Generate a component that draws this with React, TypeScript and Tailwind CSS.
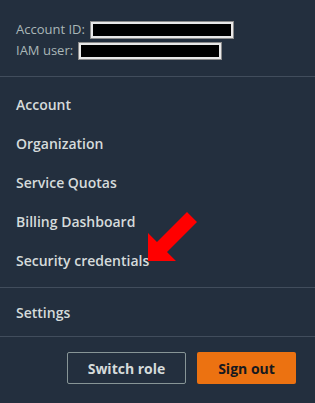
const menu = ["Account", "Organization", "Service Quotas", "Billing Dashboard", "Security credentials"];

export default function App() {
  return (
    <div
      className="relative w-[315px] h-[403px] bg-[#232f3e] text-[#d5dbdb] overflow-hidden"
      style={{ fontFamily: '"Open Sans", "Noto Sans", sans-serif' }}
    >
      {/* Account info */}
      <div className="h-[77px] pt-[19px] px-4 text-[13px] text-[#aab7b8] border-b border-[#414d5c]">
        <div className="flex items-center h-[21px] gap-[6px]">
          <span>Account ID:</span>
          <span className="block w-[142px] h-[16px] bg-black border-2 border-[#e8e8e8] outline outline-1 outline-[#8a8a8a]" />
        </div>
        <div className="flex items-center h-[21px] gap-[6px]">
          <span>IAM user:</span>
          <span className="block w-[142px] h-[16px] bg-black border-2 border-[#e8e8e8] outline outline-1 outline-[#8a8a8a]" />
        </div>
      </div>

      {/* Menu */}
      <div className="pt-[8px] pb-[7px] border-b border-[#414d5c]">
        {menu.map((m) => (
          <div key={m} className="h-[39px] flex items-center px-4 text-[14px] font-semibold">
            {m}
          </div>
        ))}
      </div>

      <div className="pt-[5px] pb-[4px] border-b border-[#414d5c]">
        <div className="h-[39px] flex items-center px-4 text-[14px] font-semibold">Settings</div>
      </div>

      {/* Actions */}
      <div className="flex justify-end gap-[11px] pt-[15px] pr-[19px]">
        <button className="w-[119px] h-[32px] border border-[#879596] rounded-[2px] text-[14px] font-bold text-[#d5dbdb]">
          Switch role
        </button>
        <button className="w-[99px] h-[32px] bg-[#ec7211] rounded-[2px] text-[14px] font-bold text-[#16191f]">
          Sign out
        </button>
      </div>

      {/* Annotation arrow */}
      <svg className="absolute left-0 top-0 pointer-events-none" width="315" height="403">
        <polygon
          points="148,261 148,233 157,242 187,212 197,222 167,252 176,261"
          fill="#ff0000"
        />
      </svg>
    </div>
  );
}
